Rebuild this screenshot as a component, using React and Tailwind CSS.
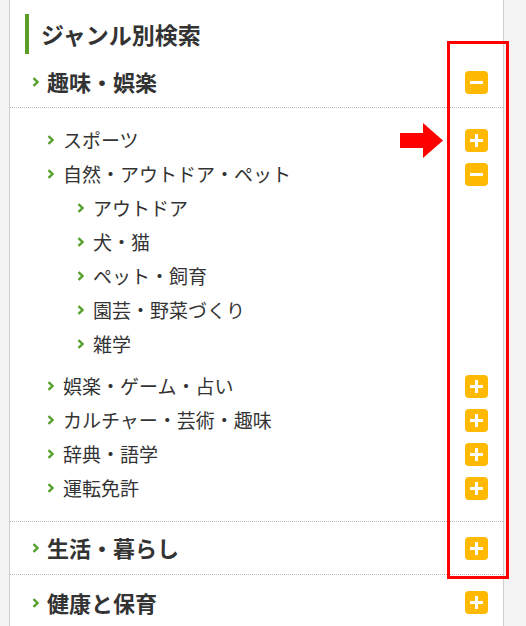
import React from 'react'

const FONT = { fontFamily: '"Noto Sans CJK JP", "Noto Sans", sans-serif' }

function Chevron() {
  return (
    <svg width="7" height="10" viewBox="0 0 7 10" className="shrink-0">
      <path d="M1.5 1.2 L5.5 5 L1.5 8.8" fill="none" stroke="#55a02a" strokeWidth="2.4" />
    </svg>
  )
}

function Toggle({ open }) {
  return (
    <span className="relative w-[23px] h-[23px] rounded-[4px] bg-[#ffb900] shrink-0">
      <span className="absolute left-[5px] top-[10px] w-[13px] h-[3px] bg-white" />
      {!open && <span className="absolute left-[10px] top-[5px] w-[3px] h-[13px] bg-white" />}
    </span>
  )
}

function Category({ label, open, h }) {
  return (
    <div className={`flex items-center pl-[22px] pr-[15px] border-b border-dotted border-[#bdbdbd] ${h}`}>
      <Chevron />
      <span className="relative -top-px ml-[8px] text-[22px] font-bold text-[#333] leading-none flex-1">{label}</span>
      <Toggle open={open} />
    </div>
  )
}

function Item({ label, toggle, indent }) {
  return (
    <div className={`flex items-center h-[34px] pr-[15px] ${indent}`}>
      <Chevron />
      <span className="relative -top-px ml-[9px] text-[19px] text-[#333] leading-none flex-1">{label}</span>
      {toggle && <Toggle open={toggle === 'open'} />}
    </div>
  )
}

export default function App() {
  const subs = ['アウトドア', '犬・猫', 'ペット・飼育', '園芸・野菜づくり', '雑学']
  const rest = ['娯楽・ゲーム・占い', 'カルチャー・芸術・趣味', '辞典・語学', '運転免許']
  return (
    <div className="relative w-[526px] h-[626px] overflow-hidden bg-[#f3f3f3]" style={FONT}>
      <div className="ml-[9px] w-[495px] h-full bg-white border-x border-[#cfcfcf] pt-[14px]">
        <div className="ml-[15px] h-[40px] border-l-4 border-[#5a9e2a] pl-[12px] flex items-center">
          <h2 className="text-[23px] font-bold text-[#333] leading-none">ジャンル別検索</h2>
        </div>
        <div className="mt-[3px]">
          <Category label="趣味・娯楽" open h="h-[51px]" />
        </div>
        <div className="pt-[15px] pb-[16px] border-b border-dotted border-[#bdbdbd]">
          <Item label="スポーツ" toggle="closed" indent="pl-[37px]" />
          <Item label="自然・アウトドア・ペット" toggle="open" indent="pl-[37px]" />
          <div className="mb-[8px]">
            {subs.map((s) => (
              <Item key={s} label={s} indent="pl-[67px]" />
            ))}
          </div>
          {rest.map((s) => (
            <Item key={s} label={s} toggle="closed" indent="pl-[37px]" />
          ))}
        </div>
        <Category label="生活・暮らし" h="h-[53px]" />
        <Category label="健康と保育" h="h-[56px]" />
      </div>

      <div className="absolute left-[447px] top-[41px] w-[62px] h-[538px] border-[3px] border-[#ff0000]" />
      <svg className="absolute left-[400px] top-[123px]" width="44" height="35" viewBox="0 0 44 35">
        <path d="M0 10 H23 V0 L43 17.5 L23 35 V25 H0 Z" fill="#ff0000" />
      </svg>
    </div>
  )
}
